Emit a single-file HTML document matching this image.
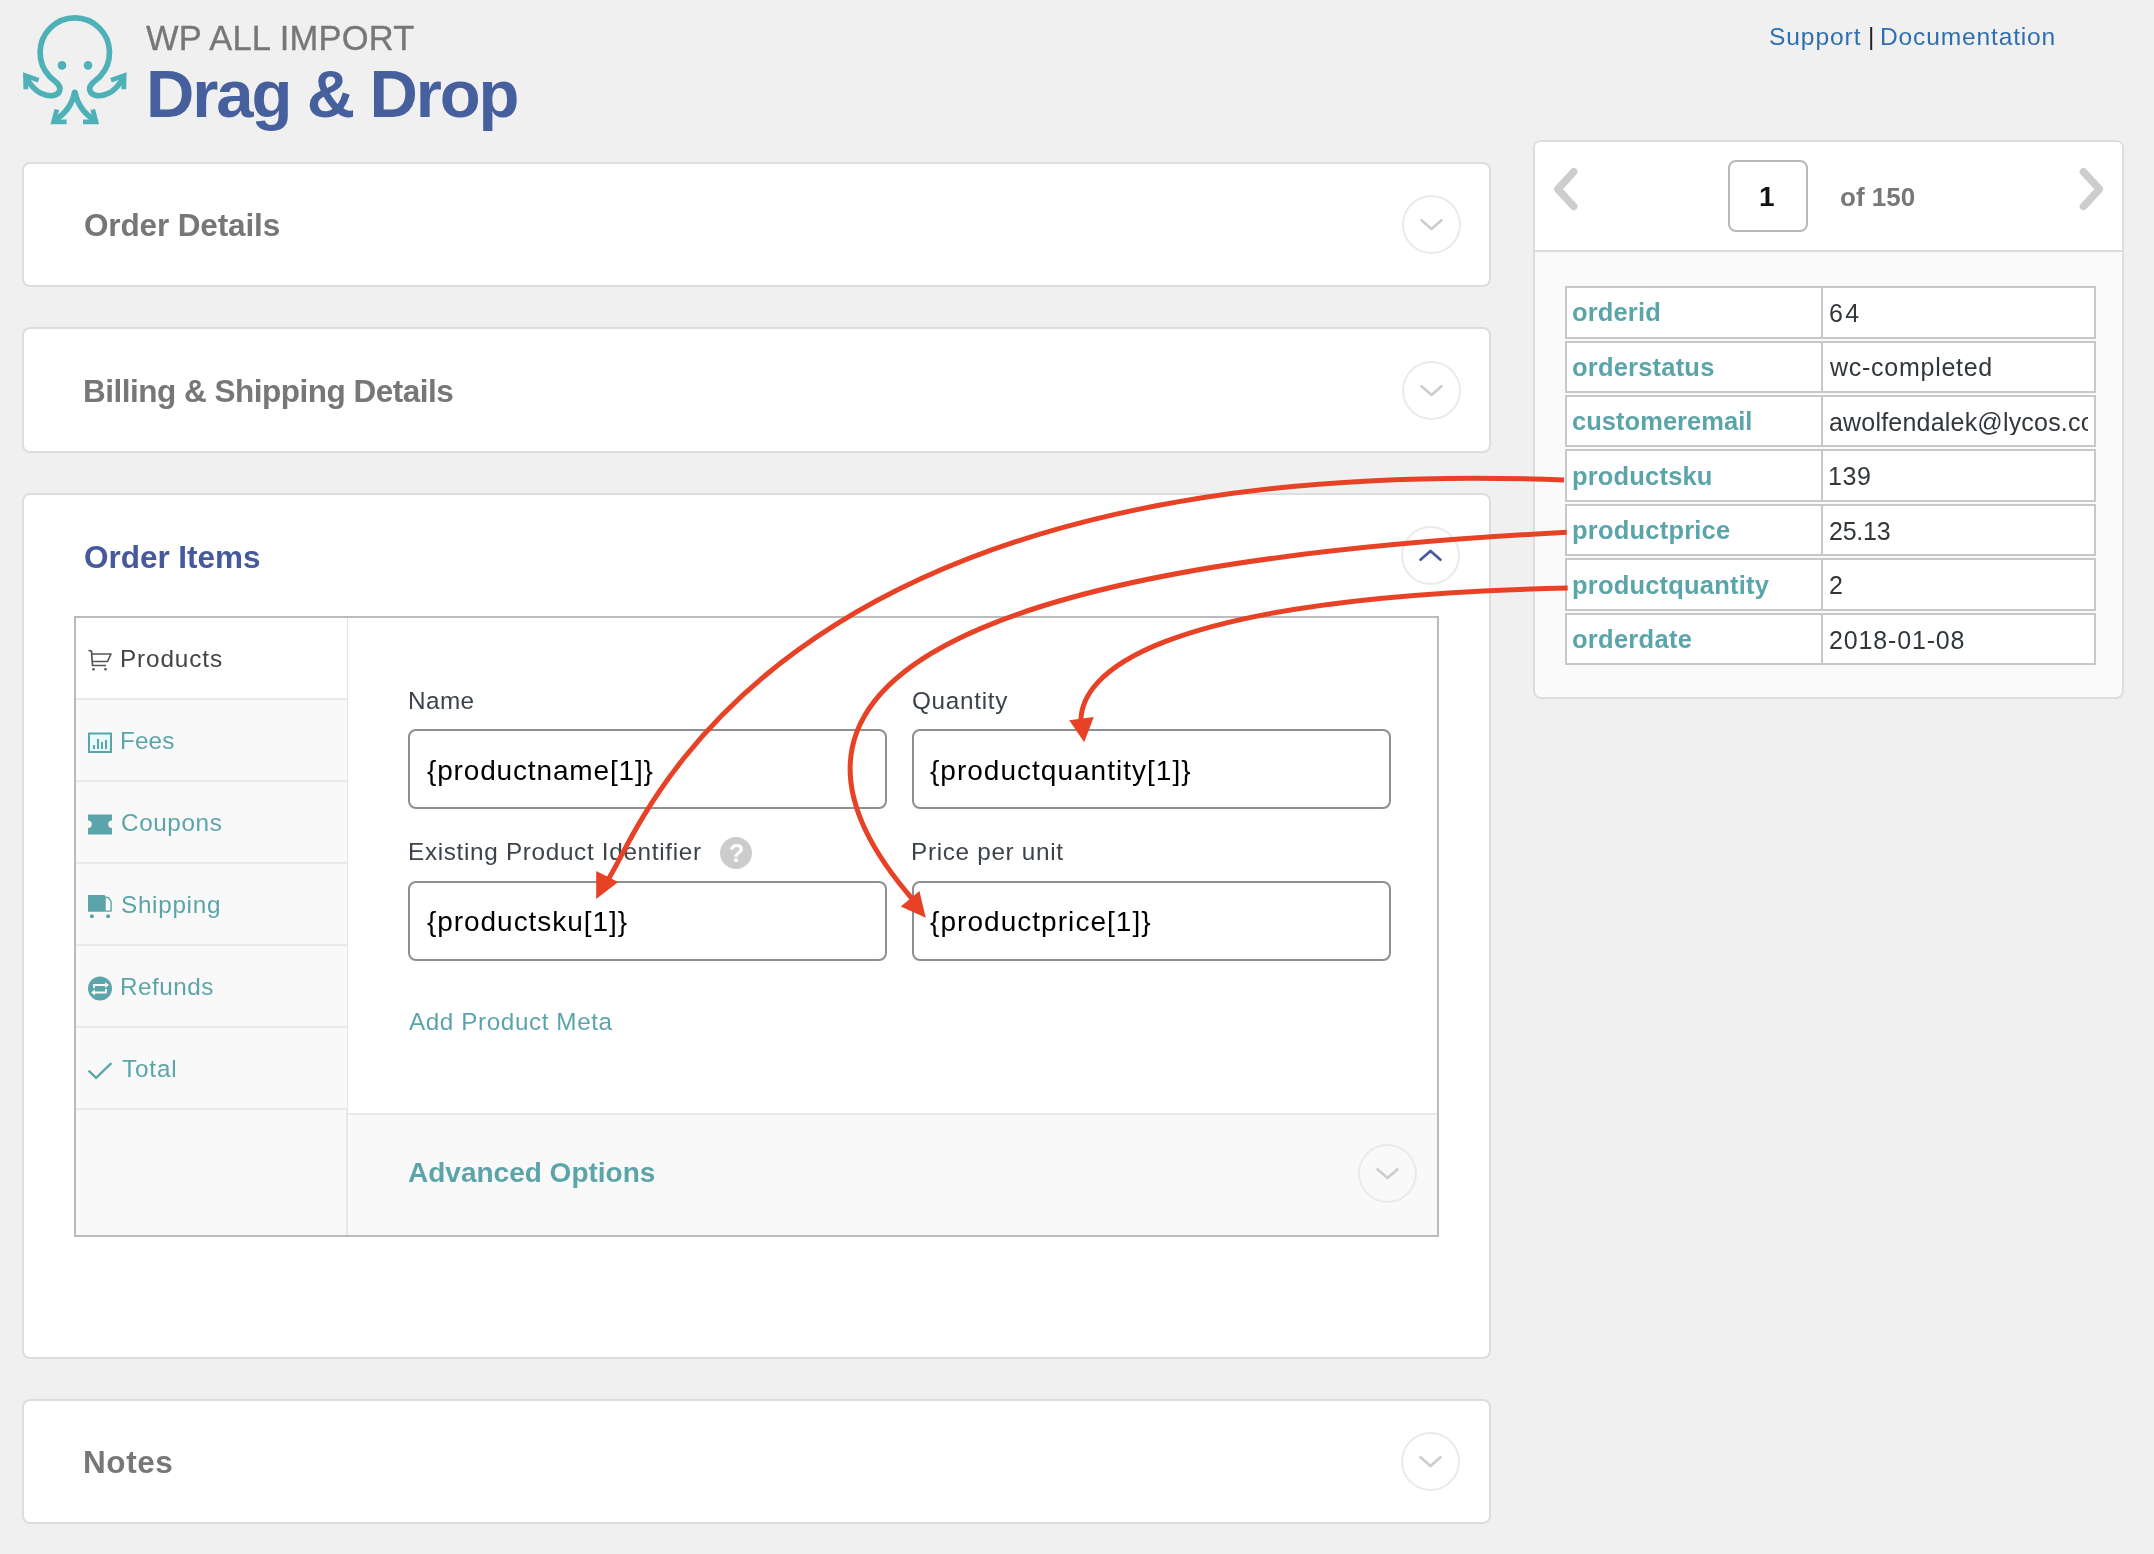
<!DOCTYPE html>
<html lang="en"><head><meta charset="utf-8"><title>WP All Import - Drag &amp; Drop</title>
<style>
html,body{margin:0;padding:0}
body{width:2154px;height:1554px;position:relative;overflow:hidden;background:#f0f0f1;font-family:"Liberation Sans",Arial,sans-serif}
.a{position:absolute;box-sizing:border-box}
.t{position:absolute;white-space:nowrap;margin:0;padding:0;will-change:transform}
.panel{position:absolute;box-sizing:border-box;background:#fff;border:2px solid #ddd;border-radius:8px}
.tog{position:absolute;box-sizing:border-box;width:59px;height:59px;border:2px solid #eaeaea;border-radius:50%;background:#fff}
.tog svg{position:absolute;left:0;top:0}
.row{position:absolute;box-sizing:border-box;left:1565px;width:531px;height:53px;border:2px solid #c8c8c8;background:#fff}
.row i{position:absolute;left:254px;top:0;width:2px;height:100%;background:#c8c8c8}
.inp{position:absolute;box-sizing:border-box;width:479px;height:80px;border:2px solid #8c8f94;border-radius:8px;background:#fff}
.side{position:absolute;left:76px;width:271px;height:82px;box-sizing:border-box;border-bottom:2px solid #e9e9e9;background:#f9f9f9}

</style></head>
<body>
<!-- logo -->
<svg class="a" style="left:0;top:0" width="150" height="140" viewBox="0 0 150 140">
<g fill="none" stroke="#4fb1b8" stroke-width="5.7" stroke-linecap="butt" stroke-linejoin="round">
<path d="M26.5 78 C30 84.5 35 90.3 41 93.3 C49 97.3 58.3 96.5 59.8 90 C61.2 84.5 54 81 49.4 76.3 A34.7 34.7 0 1 1 100.2 76.3 C95.6 81 88.4 84.5 89.8 90 C91.3 96.5 100.6 97.3 108.6 93.3 C114.6 90.3 119.6 84.5 123.1 78"/>
<path d="M74.8 91.5 C72.5 104 65 114 54.5 120.5"/>
<path d="M74.8 91.5 C77.1 104 84.6 114 95.1 120.5"/>
</g>
<g fill="none" stroke="#4fb1b8" stroke-width="4.8" stroke-linecap="butt" stroke-linejoin="miter" stroke-miterlimit="10">
<path d="M25.8 89.3 L25.5 75.6 L38.6 80.2"/>
<path d="M123.8 89.3 L124.1 75.6 L111 80.2"/>
<path d="M56.8 109.5 L53.6 121.8 L66.6 121.8"/>
<path d="M92.8 109.5 L96 121.8 L83 121.8"/>
</g>
<circle cx="62" cy="65.4" r="4.3" fill="#4fb1b8"/><circle cx="88" cy="65.4" r="4.3" fill="#4fb1b8"/>
<circle cx="74.8" cy="92.3" r="2.85" fill="#4fb1b8"/>
</svg>

<!-- left panels -->
<div class="panel" style="left:22px;top:162px;width:1469px;height:125px"></div>
<div class="panel" style="left:22px;top:327px;width:1469px;height:126px"></div>
<div class="panel" style="left:22px;top:493px;width:1469px;height:866px"></div>
<div class="panel" style="left:22px;top:1399px;width:1469px;height:125px"></div>

<!-- toggles -->
<div class="tog" style="left:1402px;top:195px"><svg width="55" height="55" viewBox="0 0 55 55"><path d="M17.5 23.3 L27.5 32 L37.5 23.3" fill="none" stroke="#cdcdcd" stroke-width="2.7" stroke-linecap="round" stroke-linejoin="round"/></svg></div>
<div class="tog" style="left:1402px;top:361px"><svg width="55" height="55" viewBox="0 0 55 55"><path d="M17.5 23.3 L27.5 32 L37.5 23.3" fill="none" stroke="#cdcdcd" stroke-width="2.7" stroke-linecap="round" stroke-linejoin="round"/></svg></div>
<div class="tog" style="left:1401px;top:526px"><svg width="55" height="55" viewBox="0 0 55 55"><path d="M17.5 31.7 L27.5 23 L37.5 31.7" fill="none" stroke="#46599c" stroke-width="2.7" stroke-linecap="round" stroke-linejoin="round"/></svg></div>
<div class="tog" style="left:1401px;top:1432px"><svg width="55" height="55" viewBox="0 0 55 55"><path d="M17.5 23.3 L27.5 32 L37.5 23.3" fill="none" stroke="#cdcdcd" stroke-width="2.7" stroke-linecap="round" stroke-linejoin="round"/></svg></div>

<!-- inner box of Order Items -->
<div class="a" style="left:74px;top:616px;width:1365px;height:621px;border:2px solid #bbb;background:#fff"></div>
<div class="a" style="left:76px;top:618px;width:271px;height:617px;background:#f9f9f9"></div>
<div class="a" style="left:346px;top:618px;width:2px;height:617px;background:#e6e6e6"></div>
<div class="side" style="top:618px;background:#fff"></div>
<div class="side" style="top:700px"></div>
<div class="side" style="top:782px"></div>
<div class="side" style="top:864px"></div>
<div class="side" style="top:946px"></div>
<div class="side" style="top:1028px"></div>
<!-- advanced -->
<div class="a" style="left:348px;top:1113px;width:1089px;height:122px;background:#f9f9f9;border-top:2px solid #e9e9e9"></div>
<div class="tog" style="left:1358px;top:1144px;background:#f9f9f9"><svg width="55" height="55" viewBox="0 0 55 55"><path d="M17.5 23.3 L27.5 32 L37.5 23.3" fill="none" stroke="#cdcdcd" stroke-width="2.7" stroke-linecap="round" stroke-linejoin="round"/></svg></div>

<!-- inputs -->
<div class="inp" style="left:408px;top:729px"></div>
<div class="inp" style="left:912px;top:729px"></div>
<div class="inp" style="left:408px;top:881px"></div>
<div class="inp" style="left:912px;top:881px"></div>
<!-- help -->
<div class="a" style="left:720px;top:837px;width:32px;height:32px;border-radius:50%;background:#ccc"></div>
<div class="t" style="left:728.5px;top:841px;font-size:25px;line-height:25px;font-weight:700;color:#fff">?</div>

<!-- sidebar icons -->
<svg class="a" style="left:86px;top:646px" width="30" height="30" viewBox="0 0 30 30"><g fill="none" stroke="#555" stroke-width="1.7" stroke-linejoin="round"><path d="M2.5 4.5 L5.5 5 L6.5 19.5 L20 19.5"/><path d="M6 8 L25 8 L21.5 15.5 L6.5 15.5"/></g><circle cx="7.5" cy="23.3" r="1.3" fill="#555"/><circle cx="19.5" cy="23.3" r="1.3" fill="#555"/></svg>
<svg class="a" style="left:86px;top:728px" width="30" height="30" viewBox="0 0 30 30"><rect x="3" y="5.5" width="22" height="18.5" fill="#e8fbfc" stroke="#5ba5aa" stroke-width="2"/><g stroke="#5ba5aa" stroke-width="2"><path d="M8 21 V17"/><path d="M12 21 V11"/><path d="M16 21 V14"/><path d="M20 21 V12"/></g></svg>
<svg class="a" style="left:86px;top:810px" width="30" height="30" viewBox="0 0 30 30"><path d="M2 4.5 H26 V10.5 A3.6 3.6 0 0 0 26 18 V24.5 H2 V18 A3.6 3.6 0 0 0 2 10.5 Z" fill="#5ba5aa"/></svg>
<svg class="a" style="left:86px;top:892px" width="30" height="30" viewBox="0 0 30 30"><path d="M2 3 H17.8 Q19.8 3 19.8 5 V19.8 H2Z" fill="#5ba5aa"/><path d="M19.8 5.2 L22.6 5.6 L25.1 9.6 V19.1 H19.8" fill="none" stroke="#5ba5aa" stroke-width="1.4" stroke-linejoin="round"/><circle cx="5.9" cy="24.2" r="2" fill="#5ba5aa"/><circle cx="22.1" cy="24.2" r="2" fill="#5ba5aa"/></svg>
<svg class="a" style="left:86px;top:974px" width="30" height="30" viewBox="0 0 30 30"><circle cx="14" cy="14.5" r="12" fill="#5ba5aa"/><g fill="none" stroke="#f9f9f9" stroke-width="1.8"><path d="M8 14 V11 H20"/><path d="M20 15 V18.5 H8"/></g><path d="M19 8 L23 11 L19 14Z" fill="#f9f9f9"/><path d="M9 15.5 L5 18.5 L9 21.5Z" fill="#f9f9f9"/></svg>
<svg class="a" style="left:86px;top:1056px" width="30" height="30" viewBox="0 0 30 30"><path d="M2.6 14.6 L10.1 21.8 L25.4 7.2" fill="none" stroke="#5ba5aa" stroke-width="2.3"/></svg>

<!-- right panel -->
<div class="panel" style="left:1533px;top:140px;width:591px;height:559px;background:#fafafa"></div>
<div class="a" style="left:1535px;top:142px;width:587px;height:108px;background:#fff;border-radius:5px 5px 0 0"></div>
<div class="a" style="left:1535px;top:250px;width:587px;height:2px;background:#ddd"></div>
<div class="a" style="left:1728px;top:160px;width:80px;height:72px;border:2px solid #b9b9b9;border-radius:8px;background:#fff"></div>
<svg class="a" style="left:1545px;top:160px" width="45" height="60" viewBox="0 0 45 60"><path d="M28.8 11.7 L12.8 29.1 L28.8 46.5" fill="none" stroke="#cdcdcd" stroke-width="7.5" stroke-linecap="round" stroke-linejoin="round"/></svg>
<svg class="a" style="left:2068px;top:160px" width="45" height="60" viewBox="0 0 45 60"><path d="M15.4 11.7 L31.4 29.1 L15.4 46.5" fill="none" stroke="#cdcdcd" stroke-width="7.5" stroke-linecap="round" stroke-linejoin="round"/></svg>

<div class="row" style="top:286px;height:53px"><i></i></div>
<div class="row" style="top:341px;height:52px"><i></i></div>
<div class="row" style="top:395px;height:52px"><i></i></div>
<div class="row" style="top:449px;height:53px"><i></i></div>
<div class="row" style="top:504px;height:52px"><i></i></div>
<div class="row" style="top:558px;height:53px"><i></i></div>
<div class="row" style="top:613px;height:52px"><i></i></div>

<!-- text -->
<div class="t" style="left:146.08px;top:20.80px;font-size:34.5px;line-height:34.5px;font-weight:400;color:#777;letter-spacing:0.197px;-webkit-text-stroke:0.35px #777">WP ALL IMPORT</div>
<div class="t" style="left:145.51px;top:59.98px;font-size:67px;line-height:67px;font-weight:700;color:#46609e;letter-spacing:-2.109px">Drag &amp; Drop</div>
<div class="t" style="left:1768.73px;top:25.48px;font-size:24.6px;line-height:24.6px;font-weight:400;color:#2f6fb0;letter-spacing:0.896px">Support</div>
<div class="t" style="left:1867.97px;top:25.48px;font-size:24.6px;line-height:24.6px;font-weight:400;color:#222;letter-spacing:0.000px">|</div>
<div class="t" style="left:1879.98px;top:25.48px;font-size:24.6px;line-height:24.6px;font-weight:400;color:#2f6fb0;letter-spacing:0.818px">Documentation</div>
<div class="t" style="left:1759.24px;top:182.80px;font-size:28px;line-height:28px;font-weight:700;color:#111;letter-spacing:0.000px">1</div>
<div class="t" style="left:1839.59px;top:184.49px;font-size:26px;line-height:26px;font-weight:700;color:#777;letter-spacing:-0.000px">of 150</div>
<div class="t" style="left:83.77px;top:209.94px;font-size:31.5px;line-height:31.5px;font-weight:700;color:#777;letter-spacing:-0.132px">Order Details</div>
<div class="t" style="left:82.97px;top:375.74px;font-size:31.5px;line-height:31.5px;font-weight:700;color:#777;letter-spacing:-0.504px">Billing &amp; Shipping Details</div>
<div class="t" style="left:83.77px;top:541.54px;font-size:31.5px;line-height:31.5px;font-weight:700;color:#46599c;letter-spacing:-0.027px">Order Items</div>
<div class="t" style="left:82.97px;top:1447.14px;font-size:31.5px;line-height:31.5px;font-weight:700;color:#777;letter-spacing:0.591px">Notes</div>
<div class="t" style="left:120.10px;top:646.73px;font-size:24.3px;line-height:24.3px;font-weight:400;color:#444;letter-spacing:0.878px">Products</div>
<div class="t" style="left:120.10px;top:728.93px;font-size:24.3px;line-height:24.3px;font-weight:400;color:#5ba5aa;letter-spacing:0.120px">Fees</div>
<div class="t" style="left:120.82px;top:810.93px;font-size:24.3px;line-height:24.3px;font-weight:400;color:#5ba5aa;letter-spacing:0.586px">Coupons</div>
<div class="t" style="left:120.63px;top:892.93px;font-size:24.3px;line-height:24.3px;font-weight:400;color:#5ba5aa;letter-spacing:0.696px">Shipping</div>
<div class="t" style="left:120.10px;top:974.93px;font-size:24.3px;line-height:24.3px;font-weight:400;color:#5ba5aa;letter-spacing:0.476px">Refunds</div>
<div class="t" style="left:121.55px;top:1056.93px;font-size:24.3px;line-height:24.3px;font-weight:400;color:#5ba5aa;letter-spacing:0.832px">Total</div>
<div class="t" style="left:407.60px;top:689.03px;font-size:24.3px;line-height:24.3px;font-weight:400;color:#3c434a;letter-spacing:0.425px">Name</div>
<div class="t" style="left:912.10px;top:689.03px;font-size:24.3px;line-height:24.3px;font-weight:400;color:#3c434a;letter-spacing:0.709px">Quantity</div>
<div class="t" style="left:407.60px;top:839.93px;font-size:24.3px;line-height:24.3px;font-weight:400;color:#3c434a;letter-spacing:0.674px">Existing Product Identifier</div>
<div class="t" style="left:911.30px;top:839.93px;font-size:24.3px;line-height:24.3px;font-weight:400;color:#3c434a;letter-spacing:0.685px">Price per unit</div>
<div class="t" style="left:426.62px;top:756.50px;font-size:28px;line-height:28px;font-weight:400;color:#000;letter-spacing:0.844px">{productname[1]}</div>
<div class="t" style="left:930.42px;top:756.50px;font-size:28px;line-height:28px;font-weight:400;color:#000;letter-spacing:1.012px">{productquantity[1]}</div>
<div class="t" style="left:426.62px;top:907.70px;font-size:28px;line-height:28px;font-weight:400;color:#000;letter-spacing:0.945px">{productsku[1]}</div>
<div class="t" style="left:930.42px;top:907.70px;font-size:28px;line-height:28px;font-weight:400;color:#000;letter-spacing:1.047px">{productprice[1]}</div>
<div class="t" style="left:408.63px;top:1009.73px;font-size:24.3px;line-height:24.3px;font-weight:400;color:#5ba5aa;letter-spacing:0.575px">Add Product Meta</div>
<div class="t" style="left:407.89px;top:1158.90px;font-size:28px;line-height:28px;font-weight:700;color:#5ba5aa;letter-spacing:0.002px">Advanced Options</div>
<div class="t" style="left:1572.21px;top:300.11px;font-size:25.5px;line-height:25.5px;font-weight:700;color:#5ba5aa;letter-spacing:0.150px">orderid</div>
<div class="t" style="left:1572.21px;top:354.61px;font-size:25.5px;line-height:25.5px;font-weight:700;color:#5ba5aa;letter-spacing:0.204px">orderstatus</div>
<div class="t" style="left:1572.21px;top:409.11px;font-size:25.5px;line-height:25.5px;font-weight:700;color:#5ba5aa;letter-spacing:0.037px">customeremail</div>
<div class="t" style="left:1571.58px;top:463.61px;font-size:25.5px;line-height:25.5px;font-weight:700;color:#5ba5aa;letter-spacing:0.177px">productsku</div>
<div class="t" style="left:1571.58px;top:518.11px;font-size:25.5px;line-height:25.5px;font-weight:700;color:#5ba5aa;letter-spacing:0.211px">productprice</div>
<div class="t" style="left:1571.58px;top:572.61px;font-size:25.5px;line-height:25.5px;font-weight:700;color:#5ba5aa;letter-spacing:0.197px">productquantity</div>
<div class="t" style="left:1572.21px;top:627.11px;font-size:25.5px;line-height:25.5px;font-weight:700;color:#5ba5aa;letter-spacing:0.277px">orderdate</div>
<div class="t" style="left:1828.89px;top:300.54px;font-size:25px;line-height:25px;font-weight:400;color:#32373c;letter-spacing:2.235px">64</div>
<div class="t" style="left:1830.09px;top:355.04px;font-size:25px;line-height:25px;font-weight:400;color:#32373c;letter-spacing:0.732px">wc-completed</div>
<div class="t" style="left:1829.04px;top:409.54px;font-size:25px;line-height:25px;font-weight:400;color:#32373c;letter-spacing:0.200px;width:259.46px;overflow:hidden">awolfendalek@lycos.com</div>
<div class="t" style="left:1828.20px;top:464.04px;font-size:25px;line-height:25px;font-weight:400;color:#32373c;letter-spacing:0.569px">139</div>
<div class="t" style="left:1828.93px;top:518.54px;font-size:25px;line-height:25px;font-weight:400;color:#32373c;letter-spacing:-0.242px">25.13</div>
<div class="t" style="left:1828.93px;top:573.04px;font-size:25px;line-height:25px;font-weight:400;color:#32373c;letter-spacing:0.000px">2</div>
<div class="t" style="left:1828.93px;top:627.54px;font-size:25px;line-height:25px;font-weight:400;color:#32373c;letter-spacing:0.847px">2018-01-08</div>
<svg class="a" style="left:0;top:0;pointer-events:none" width="2154" height="1554" viewBox="0 0 2154 1554">
<g fill="none" stroke="#e74226" stroke-width="5" stroke-linecap="butt">
<path d="M1564 479.9 C743 448.5 635.9 849.5 604.9 884"/>
<path d="M1566.8 532.3 C1147 553.9 678.4 629.7 912.8 899.5"/>
<path d="M1567.7 588 C1143.8 597.7 1081.6 676.7 1080.9 720.4"/>
</g>
<g fill="#e74226">
<path d="M596.2 899.1 L596.2 871 L618.2 882.1Z"/>
<path d="M925.8 917.7 L900.8 906.5 L919.4 891Z"/>
<path d="M1084.2 742.3 L1069.2 720.3 L1093.8 717Z"/>
</g>
</svg>

</body></html>
